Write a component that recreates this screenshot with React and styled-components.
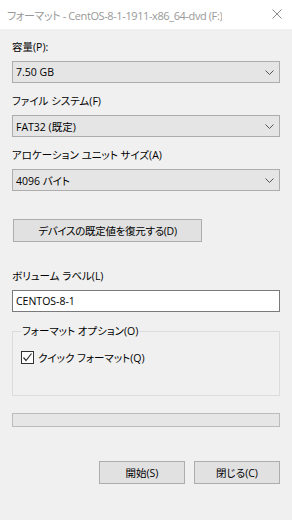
import React from "react";
import styled, { createGlobalStyle } from "styled-components";

const GlobalStyle = createGlobalStyle`
  html, body {
    margin: 0;
    padding: 0;
    background: #f0f0f0;
  }
  body {
    font-family: "Open Sans", "Noto Sans CJK JP", sans-serif;
    font-feature-settings: "palt";
    font-size: 10.5px;
    color: #000;
  }
`;

const Window = styled.div`
  width: 292px;
  height: 520px;
  background: #f0f0f0;
  display: flex;
  flex-direction: column;
  overflow: hidden;
`;

const TitleBar = styled.div`
  height: 29px;
  flex-shrink: 0;
  background: #fff;
  display: flex;
  align-items: center;
  justify-content: space-between;
  padding: 0 10px 0 7px;
  box-sizing: border-box;
`;

const Title = styled.span`
  font-size: 11px;
  letter-spacing: -0.4px;
  color: #999;
  white-space: nowrap;
  overflow: hidden;
`;

const CloseIcon = styled.svg`
  width: 10px;
  height: 10px;
  flex-shrink: 0;
  margin-top: -1px;
`;

const Body = styled.div`
  padding: 11px 12px 0 12px;
  display: flex;
  flex-direction: column;
`;

const Field = styled.div`
  display: flex;
  flex-direction: column;
  gap: 6px;
  margin-top: ${(p) => p.$top || 0}px;
`;

const Label = styled.div`
  height: 15px;
  line-height: 15px;
  white-space: nowrap;
`;

const Combo = styled.div`
  height: 22px;
  box-sizing: border-box;
  border: 1px solid #adadad;
  background: #e5e5e5;
  display: flex;
  align-items: center;
  justify-content: space-between;
  padding: 0 5px 0 3px;
`;

const Chevron = styled.svg`
  width: 9px;
  height: 5px;
`;

const Button = styled.button`
  height: 23px;
  width: ${(p) => p.$w}px;
  box-sizing: border-box;
  border: 1px solid #adadad;
  background: #e1e1e1;
  font: inherit;
  color: #000;
  padding: 0;
  margin: 0;
`;

const DefaultButton = styled(Button)`
  margin: 28px 0 0 1px;
  align-self: flex-start;
  letter-spacing: -0.3px;
`;

const TextBox = styled.div`
  height: 22px;
  box-sizing: border-box;
  border: 1px solid #7a7a7a;
  background: #fff;
  display: flex;
  align-items: center;
  padding: 0 3px;
`;

const Group = styled.fieldset`
  margin: 12px 0 0 0;
  border: 1px solid #dcdcdc;
  padding: 11px 8px 30px 8px;
  min-inline-size: 0;
`;

const Legend = styled.legend`
  padding: 0 1px;
  line-height: 15px;
  color: #000;
`;

const CheckRow = styled.label`
  display: flex;
  align-items: center;
  gap: 4px;
  height: 15px;
`;

const CheckBox = styled.span`
  width: 13px;
  height: 13px;
  box-sizing: border-box;
  border: 1px solid #333;
  background: #fff;
  display: flex;
  align-items: center;
  justify-content: center;
`;

const Progress = styled.div`
  margin-top: 17px;
  height: 14px;
  box-sizing: border-box;
  border: 1px solid #bcbcbc;
  background: #e6e6e6;
`;

const Actions = styled.div`
  margin-top: 34px;
  display: flex;
  justify-content: flex-end;
  gap: 9px;
`;

const ChevronDown = () => (
  <Chevron viewBox="0 0 9 5">
    <polyline points="0.5,0.5 4.5,4.5 8.5,0.5" fill="none" stroke="#555" strokeWidth="1" />
  </Chevron>
);

const Select = ({ value }) => (
  <Combo>
    <span>{value}</span>
    <ChevronDown />
  </Combo>
);

export default function App() {
  return (
    <Window>
      <GlobalStyle />
      <TitleBar>
        <Title>フォーマット - CentOS-8-1-1911-x86_64-dvd (F:)</Title>
        <CloseIcon viewBox="0 0 10 10">
          <path d="M0.5 0.5 L9.5 9.5 M9.5 0.5 L0.5 9.5" stroke="#8a8a8a" strokeWidth="1" />
        </CloseIcon>
      </TitleBar>
      <Body>
        <Field>
          <Label>容量(P):</Label>
          <Select value="7.50 GB" />
        </Field>
        <Field $top={11}>
          <Label>ファイル システム(F)</Label>
          <Select value="FAT32 (既定)" />
        </Field>
        <Field $top={11}>
          <Label>アロケーション ユニット サイズ(A)</Label>
          <Select value="4096 バイト" />
        </Field>
        <DefaultButton $w={189}>デバイスの既定値を復元する(D)</DefaultButton>
        <Field $top={27}>
          <Label>ボリューム ラベル(L)</Label>
          <TextBox>CENTOS-8-1</TextBox>
        </Field>
        <Group>
          <Legend>フォーマット オプション(O)</Legend>
          <CheckRow>
            <CheckBox>
              <svg width="11" height="11" viewBox="0 0 11 11">
                <polyline points="1.5,5.5 4,8.5 9.5,1.5" fill="none" stroke="#333" strokeWidth="1.2" />
              </svg>
            </CheckBox>
            クイック フォーマット(Q)
          </CheckRow>
        </Group>
        <Progress />
        <Actions>
          <Button $w={86}>開始(S)</Button>
          <Button $w={86}>閉じる(C)</Button>
        </Actions>
      </Body>
    </Window>
  );
}
